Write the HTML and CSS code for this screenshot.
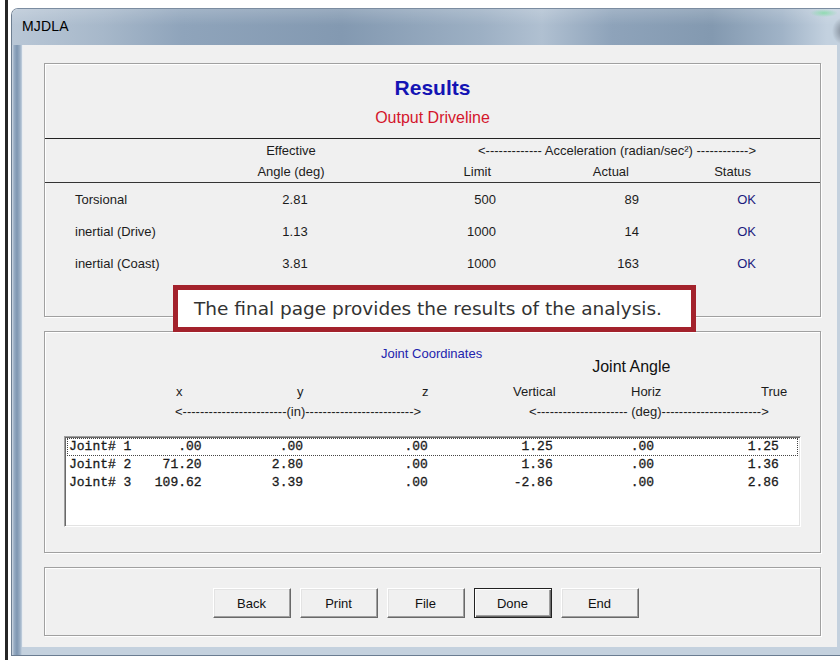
FILE: index.html
```html
<!DOCTYPE html>
<html lang="en">
<head>
<meta charset="utf-8">
<title>MJDLA</title>
<link rel="stylesheet" href="styles.css">
</head>
<body>
<div class="desk">
  <div class="edge"></div>
  <div class="window">
    <div class="titlebar">
      <span class="title">MJDLA</span>
      <span class="caption-glow"></span>
    </div>
    <div class="frame">
      <div class="client">

        <section class="group results">
          <header class="results-head">
            <h1>Results</h1>
            <p class="subtitle">Output Driveline</p>
          </header>

          <div class="accel">
            <div class="accel-head">
              <span class="c-angle">Effective</span>
              <span class="c-span">&lt;------------- Acceleration (radian/sec²) ------------&gt;</span>
              <span class="c-angle">Angle (deg)</span>
              <span class="c-limit h">Limit</span>
              <span class="c-actual h">Actual</span>
              <span class="c-status h">Status</span>
            </div>

            <div class="accel-row">
              <span class="c-label">Torsional</span>
              <span class="c-angle v">2.81</span>
              <span class="c-limit">500</span>
              <span class="c-actual">89</span>
              <span class="c-status ok">OK</span>
            </div>
            <div class="accel-row">
              <span class="c-label">inertial (Drive)</span>
              <span class="c-angle v">1.13</span>
              <span class="c-limit">1000</span>
              <span class="c-actual">14</span>
              <span class="c-status ok">OK</span>
            </div>
            <div class="accel-row">
              <span class="c-label">inertial (Coast)</span>
              <span class="c-angle v">3.81</span>
              <span class="c-limit">1000</span>
              <span class="c-actual">163</span>
              <span class="c-status ok">OK</span>
            </div>
          </div>
        </section>

        <section class="group joints">
          <div class="joint-titles">
            <span class="joint-coords">Joint Coordinates</span>
            <span class="joint-angle">Joint Angle</span>
          </div>
          <div class="joint-head">
            <span>x</span>
            <span>y</span>
            <span>z</span>
            <span>Vertical</span>
            <span>Horiz</span>
            <span>True</span>
          </div>
          <div class="joint-units">
            <span class="unit-in">&lt;------------------------(in)-------------------------&gt;</span>
            <span class="unit-deg">&lt;--------------------- (deg)-----------------------&gt;</span>
          </div>
          <div class="listbox">
            <div class="list-row focused">Joint# 1      .00          .00             .00            1.25          .00            1.25</div>
            <div class="list-row">Joint# 2    71.20         2.80             .00            1.36          .00            1.36</div>
            <div class="list-row">Joint# 3   109.62         3.39             .00           -2.86          .00            2.86</div>
          </div>
        </section>

        <section class="group actions">
          <button class="btn" type="button">Back</button>
          <button class="btn" type="button">Print</button>
          <button class="btn" type="button">File</button>
          <button class="btn default" type="button">Done</button>
          <button class="btn" type="button">End</button>
        </section>

        <div class="callout">The final page provides the results of the analysis.</div>
      </div>
    </div>
  </div>
</div>
</body>
</html>
```

FILE: styles.css
```css
* { box-sizing: border-box; }

body {
  margin: 0;
  width: 840px;
  height: 660px;
  overflow: hidden;
  background: #ffffff;
  font-family: "Liberation Sans", Arial, sans-serif;
  font-size: 13px;
  color: #1c1c1c;
}

.desk {
  display: flex;
  height: 660px;
}

/* edge of the window sitting behind */
.edge {
  flex: none;
  width: 3px;
  margin-left: 5px;
  background: #262626;
}

/* ---------- Aero style window frame ---------- */
.window {
  flex: none;
  width: 840px;
  height: 648px;
  margin: 8px 0 0 3px;
  display: flex;
  flex-direction: column;
  border-radius: 7px 7px 0 0;
  overflow: hidden;
  border-left: 1px solid #6e7f92;
  border-top: 1px solid #7b8ca0;
}

.titlebar {
  position: relative;
  flex: none;
  height: 36px;
  display: flex;
  align-items: center;
  padding: 0 0 3px 10px;
  background:
    linear-gradient(to bottom, rgba(255,255,255,.18), rgba(255,255,255,0) 45%),
    linear-gradient(90deg, #b9c7d6 0, #a7b8ca 90px, #8fa4bb 170px, #8399b1 330px,
      #9db0c4 470px, #b0c0d1 530px, #8ea3ba 600px, #8399b0 700px, #a0b3c7 770px, #c3d1df 815px);
}

.title {
  font-size: 14px;
  color: #000;
  letter-spacing: .2px;
}

/* blurred glint of the caption buttons at the far right */
.caption-glow {
  position: absolute;
  left: 790px;
  top: 0;
  width: 50px;
  height: 36px;
  background:
    radial-gradient(ellipse 14px 4px at 22px 4px, rgba(130, 220, 165, .8), rgba(130,220,165,0)),
    radial-gradient(ellipse 12px 14px at 42px 22px, rgba(60, 66, 78, .55), rgba(60,66,78,0));
}

.frame {
  flex: 1;
  display: flex;
  padding: 0 0 8px 10px;
  background:
    linear-gradient(90deg, #d0d9e3 0, #98adc4 2px, #7e96b1 5px, #9bafc5 8px, #c4d1de 10px, #c4d1de 100%);
  border-bottom: 1px solid #6a7c91;
}

.client {
  position: relative;
  width: 815px;
  background: #f0f0f0;
  padding: 18px 16px 0 22px;
  display: flex;
  flex-direction: column;
  gap: 14px;
  border-left: 1px solid #e9edf1;
}

/* ---------- group boxes ---------- */
.group {
  position: relative;
  width: 777px;
  border: 1px solid #a0a0a0;
  box-shadow: inset 1px 1px 0 #fff, 1px 1px 0 #fff;
}

.results { height: 254px; margin-left: -1px; }
.joints  { height: 222px; margin-left: -1px; }
.actions { height: 69px; margin-left: -1px; }

/* ---------- results group ---------- */
.results-head {
  height: 75px;
  padding-top: 12px;
  border-bottom: 1px solid #222;
  text-align: center;
}

.results-head h1 {
  margin: 0;
  height: 24px;
  line-height: 24px;
  font-size: 21px;
  font-weight: bold;
  color: #1414b4;
}

.subtitle {
  margin: 8px 0 0;
  line-height: 20px;
  font-size: 16px;
  color: #d4152b;
}

.accel-head,
.accel-row {
  display: grid;
  grid-template-columns: 206px 80px 175px 133px 123px;
}

.accel-head {
  grid-template-rows: 22px 20px;
  align-items: center;
  padding-bottom: 1px;
  border-bottom: 1px solid #333;
}

.accel-row {
  height: 32px;
  align-items: center;
}

.accel-head .c-angle { grid-column: 2; text-align: center; }
.c-span {
  grid-column: 3 / span 3;
  padding-left: 147px;
  white-space: nowrap;
}

.c-label { padding-left: 30px; }
.c-angle { text-align: center; }
.c-angle.v { padding-left: 8px; }
.c-limit  { grid-column: 3; text-align: right; padding-right: 10px; }
.c-actual { grid-column: 4; text-align: right; }
.c-status { grid-column: 5; text-align: right; padding-right: 6px; }

.c-limit.h  { padding-right: 15px; }
.c-actual.h { padding-right: 10px; }
.c-status.h { padding-right: 11px; }

.ok { color: #1b1b7d; }

/* ---------- joint group ---------- */
.joint-titles {
  display: flex;
  align-items: flex-start;
  height: 50px;
  padding-top: 14px;
}

.joint-coords {
  margin-left: 336px;
  line-height: 16px;
  font-size: 13px;
  color: #2323ad;
}

.joint-angle {
  margin: 11px 0 0 110px;
  line-height: 20px;
  font-size: 16px;
  color: #111;
}

.joint-head {
  display: grid;
  grid-template-columns: 122px 125px 91px 118px 130px 59px;
  padding-left: 130px;
  height: 20px;
  line-height: 20px;
}

.joint-head span:first-child { padding-left: 1px; }

.joint-units {
  display: flex;
  height: 20px;
  line-height: 20px;
  white-space: nowrap;
}

.unit-in  { margin-left: 130px; }
.unit-deg { margin-left: 108px; }

.listbox {
  height: 91px;
  margin: 14px 19px 0;
  padding: 1px 2px 0 2px;
  background: #fff;
  border: 1px solid;
  border-color: #a0a0a0 #fff #fff #a0a0a0;
  box-shadow: inset 1px 1px 0 #696969, inset -1px -1px 0 #e3e3e3;
  font-family: "Liberation Mono", "Courier New", monospace;
  font-size: 13px;
  color: #1a1a1a;
  -webkit-text-stroke: 0.3px #1a1a1a;
}

.list-row {
  height: 18px;
  line-height: 18px;
  padding-left: 2px;
  white-space: pre;
}

.list-row.focused { outline: 1px dotted #444; outline-offset: -1px; }

/* ---------- action buttons ---------- */
.actions {
  display: flex;
  justify-content: center;
  align-items: center;
  gap: 9px;
  padding: 3px 14px 0 0;
}

.btn {
  width: 78px;
  height: 30px;
  padding: 0;
  font-family: "Liberation Sans", Arial, sans-serif;
  font-size: 13px;
  color: #111;
  background: #f0f0f0;
  border: 1px solid;
  border-color: #fff #696969 #696969 #fff;
  box-shadow: inset -1px -1px 0 #a0a0a0, inset 1px 1px 0 #e3e3e3;
}

.btn.default {
  border-color: #222;
  box-shadow: inset 1px 1px 0 #fff, inset -1px -1px 0 #696969, inset -2px -2px 0 #a0a0a0;
}

/* ---------- annotation laid over the dialog ---------- */
.callout {
  position: absolute;
  left: 150px;
  top: 240px;
  width: 523px;
  height: 47px;
  padding-left: 16px;
  border: 5px solid #a3222c;
  background: #fff;
  font-family: "DejaVu Sans", Verdana, sans-serif;
  font-size: 18.5px;
  line-height: 37px;
  color: #333;
  white-space: nowrap;
}
```
